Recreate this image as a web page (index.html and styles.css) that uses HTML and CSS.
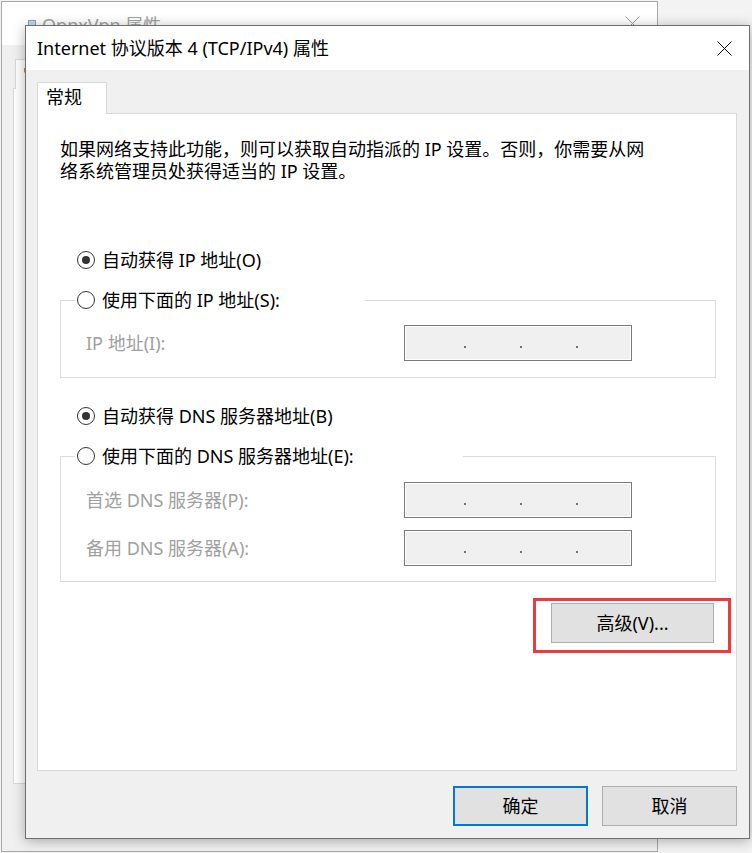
FILE: index.html
```html
<!DOCTYPE html>
<html lang="zh-CN">
<head>
<meta charset="utf-8">
<title>Internet 协议版本 4 (TCP/IPv4) 属性</title>
<link rel="stylesheet" href="styles.css">
</head>
<body>
<div class="desktop">
  <div class="bgwin">
    <div class="bgwin-title">
      <svg class="bgwin-icon" viewBox="0 0 8 8" width="8" height="8"><rect x="0" y="0" width="8" height="8" fill="#8aa0b8"/><rect x="1" y="1" width="6" height="4" fill="#c9d6e4"/></svg>
      <span class="bgwin-text">OpnxVpn 属性</span>
      <svg class="bgwin-close" viewBox="0 0 15 15" width="15" height="15"><path d="M0.5 0.5 L14.5 14.5 M14.5 0.5 L0.5 14.5" stroke="#9a9a9a" stroke-width="1" fill="none"/></svg>
    </div>
    <div class="bgwin-body">
      <div class="bgwin-tab">常规</div>
      <div class="bgwin-panel"></div>
    </div>
  </div>

  <div class="dialog">
    <div class="titlebar">
      <span class="title">Internet 协议版本 4 (TCP/IPv4) 属性</span>
      <svg class="close" viewBox="0 0 15 15" width="15" height="15"><path d="M0.5 0.5 L14.5 14.5 M14.5 0.5 L0.5 14.5" stroke="#000" stroke-width="1" fill="none"/></svg>
    </div>
    <div class="body">
      <div class="tabs"><div class="tab">常规</div></div>
      <div class="panel">
        <p class="desc">如果网络支持此功能，则可以获取自动指派的 IP 设置。否则，你需要从网<br>络系统管理员处获得适当的 IP 设置。</p>

        <div class="radio first"><span class="dot checked"></span><span class="rtext">自动获得 IP 地址(O)</span></div>

        <fieldset class="group group-ip">
          <legend class="legend legend-ip"><span class="radio in-legend"><span class="dot"></span><span class="rtext">使用下面的 IP 地址(S):</span></span></legend>
          <div class="field">
            <span class="label">IP 地址(I):</span>
            <div class="ipbox"><span class="ipdot"></span><span class="ipdot"></span><span class="ipdot"></span></div>
          </div>
        </fieldset>

        <div class="radio second"><span class="dot checked"></span><span class="rtext">自动获得 DNS 服务器地址(B)</span></div>

        <fieldset class="group group-dns">
          <legend class="legend legend-dns"><span class="radio in-legend"><span class="dot"></span><span class="rtext">使用下面的 DNS 服务器地址(E):</span></span></legend>
          <div class="field">
            <span class="label">首选 DNS 服务器(P):</span>
            <div class="ipbox"><span class="ipdot"></span><span class="ipdot"></span><span class="ipdot"></span></div>
          </div>
          <div class="field field-next">
            <span class="label">备用 DNS 服务器(A):</span>
            <div class="ipbox"><span class="ipdot"></span><span class="ipdot"></span><span class="ipdot"></span></div>
          </div>
        </fieldset>

        <div class="adv-row">
          <button class="btn adv">高级(V)...</button>
        </div>
      </div>
      <div class="actions">
        <button class="btn ok">确定</button>
        <button class="btn">取消</button>
      </div>
    </div>
  </div>
</div>
</body>
</html>
```
FILE: styles.css
```css
* { box-sizing: border-box; }
html, body { margin: 0; padding: 0; }
body {
  width: 752px;
  height: 853px;
  overflow: hidden;
  background: #f3f3f3;
  font-family: "Noto Sans", "Noto Sans CJK SC", sans-serif;
  font-size: 18px;
  color: #000;
}
.desktop { position: relative; width: 752px; height: 853px; }

/* background window */
.bgwin {
  position: absolute;
  z-index: 0;
  left: 1px;
  top: 1px;
  width: 657px;
  height: 851px;
  border: 1px solid #a8a8a8;
  background: #f0f0f0;
  display: flex;
  flex-direction: column;
}
.bgwin-title {
  height: 43px;
  flex-shrink: 0;
  background: #fff;
  display: flex;
  align-items: center;
  padding: 0 17px 0 26px;
}
.bgwin-icon { margin-right: 6px; flex-shrink: 0; }
.bgwin-text { flex: 1; color: #a0a0a0; }
.bgwin-body {
  flex: 1;
  display: flex;
  flex-direction: column;
  padding: 14px 12px 67px 11px;
}
.bgwin-tab {
  width: 60px;
  height: 30px;
  margin-left: 2px;
  margin-bottom: -1px;
  border: 1px solid #d9d9d9;
  border-bottom: none;
  background: #fff;
  padding-left: 7px;
  line-height: 28px;
  position: relative;
  z-index: 1;
}
.bgwin-panel {
  flex: 1;
  border: 1px solid #d9d9d9;
  background: #fff;
}

/* main dialog */
.dialog {
  position: absolute;
  z-index: 1;
  left: 25px;
  top: 25px;
  width: 725px;
  height: 814px;
  border: 1px solid #6f6f6f;
  background: #f0f0f0;
  box-shadow: 0 2px 12px rgba(0, 0, 0, 0.3);
  display: flex;
  flex-direction: column;
}
.titlebar {
  height: 44px;
  flex-shrink: 0;
  background: #fff;
  display: flex;
  align-items: center;
  justify-content: space-between;
  padding: 0 17px 0 11px;
}
.title { white-space: nowrap; padding-bottom: 2px; }
.body {
  flex: 1;
  display: flex;
  flex-direction: column;
  padding: 12px 12px 12px 11px;
}
.tabs { display: flex; }
.tab {
  width: 70px;
  height: 32px;
  margin-bottom: -1px;
  border: 1px solid #d9d9d9;
  border-bottom: none;
  background: #fff;
  padding-left: 8px;
  line-height: 28px;
  position: relative;
  z-index: 1;
}
.panel {
  flex: 1;
  border: 1px solid #d9d9d9;
  background: #fff;
  padding: 24px 20px 0 22px;
  display: flex;
  flex-direction: column;
}
.desc {
  margin: 0;
  line-height: 22px;
  white-space: nowrap;
}

.radio {
  display: flex;
  align-items: center;
  height: 24px;
  gap: 7px;
  margin-left: 17px;
  white-space: nowrap;
}
.radio.first { margin-top: 66px; }
.radio.second { margin-top: 26px; }
.radio.in-legend { margin-left: 0; padding-left: 2px; }
.rtext { padding-bottom: 3px; }
.dot {
  width: 18px;
  height: 18px;
  border: 1px solid #333;
  border-radius: 50%;
  background: #fff;
  display: flex;
  align-items: center;
  justify-content: center;
  flex-shrink: 0;
}
.dot.checked::before {
  content: "";
  width: 8px;
  height: 8px;
  border-radius: 50%;
  background: #333;
}

.group {
  margin: 16px 0 0;
  padding: 13px 0 16px;
  border: 1px solid #dcdcdc;
  min-width: 0;
}
.group-dns { padding-top: 14px; padding-bottom: 15px; }
.legend {
  margin-left: 14px;
  padding: 0;
  height: 24px;
}
.legend-ip { width: 290px; }
.legend-dns { width: 388px; }

.field {
  display: grid;
  grid-template-columns: 318px 228px;
  align-items: center;
  padding-left: 25px;
}
.field-next { margin-top: 12px; }
.label { color: #a0a0a0; white-space: nowrap; padding-bottom: 3px; }
.ipbox {
  height: 36px;
  border: 1px solid #7a7a7a;
  background: #f0f0f0;
  box-shadow: inset 0 0 0 1px #fff;
  display: flex;
  align-items: flex-start;
  gap: 54px;
  padding-left: 59px;
}
.ipdot {
  width: 2px;
  height: 2px;
  margin-top: 20px;
  background: #7d6f64;
}

.adv-row {
  display: flex;
  justify-content: flex-end;
  margin-top: 21px;
  padding-right: 2px;
}
.btn {
  font-family: inherit;
  font-size: 18px;
  color: #000;
  background: #e1e1e1;
  border: 1px solid #adadad;
  border-radius: 0;
  height: 40px;
  width: 135px;
  padding: 0 0 2px;
  margin: 0;
}
.adv {
  width: 163px;
  position: relative;
}
.adv::after {
  content: "";
  position: absolute;
  left: -19px;
  right: -18px;
  top: -6px;
  bottom: -11px;
  border: 3px solid #ec3b3b;
  pointer-events: none;
}
.actions {
  display: flex;
  justify-content: flex-end;
  gap: 14px;
  margin-top: 15px;
}
.btn.ok { border: 2px solid #0078d7; }
```
